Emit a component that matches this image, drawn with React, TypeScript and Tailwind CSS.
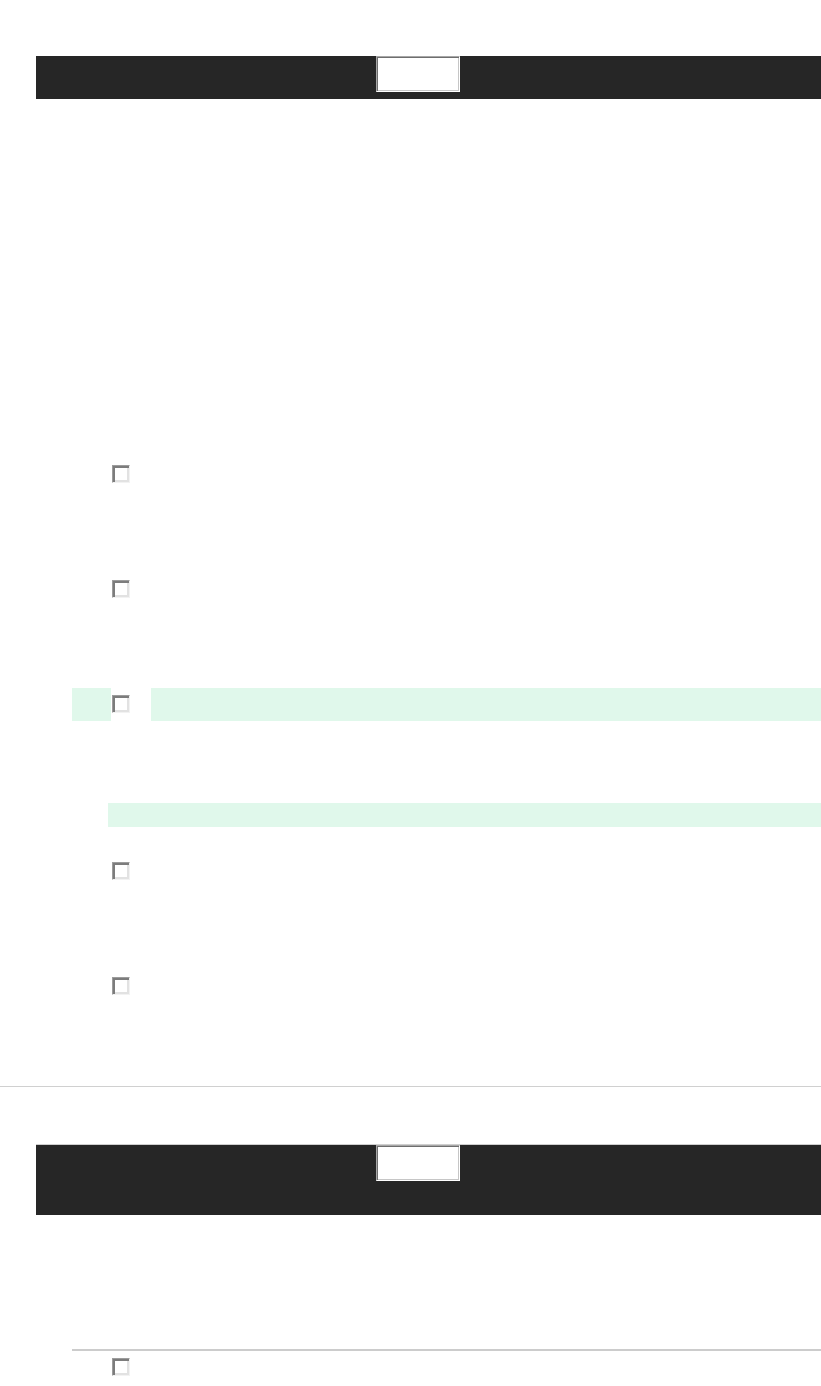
import React from 'react';

// sunken checkbox drawn like the old-style form controls in the shot
function Box() {
  return (
    <span className="block w-[18px] h-[18px] bg-white border border-t-[#9c9c9c] border-l-[#9c9c9c] border-b-[#f2f2f2] border-r-[#f2f2f2] shadow-[inset_2px_2px_0_#7c7c7c,inset_-2px_-2px_0_#e2e2e2]" />
  );
}

function Bar({ tall = false, rule = false }: { tall?: boolean; rule?: boolean }) {
  return (
    <div
      className={`ml-[36px] bg-[#262626] pl-[340px] ${tall ? 'h-[71px]' : 'h-[43px]'} ${
        rule ? 'border-t border-[#cfcfcf]' : ''
      }`}
    >
      <input
        type="text"
        aria-label="search"
        className="block w-[84px] h-[36px] bg-white outline-none border border-t-[#a7a7a7] border-l-[#a7a7a7] border-b-white border-r-white shadow-[inset_1px_1px_0_#6e6e6e,inset_-1px_-1px_0_#c6c6c6]"
      />
    </div>
  );
}

export default function App() {
  return (
    <div className="w-[821px] min-h-[1386px] bg-white font-['Liberation_Sans',sans-serif] pt-[56px]">
      <Bar />

      <div className="pl-[72px]">
        <div className="mt-[366px] pl-[40px]"><Box /></div>
        <div className="mt-[97px] pl-[40px]"><Box /></div>

        {/* selected row */}
        <div className="mt-[90px] grid grid-cols-[39px_40px_1fr] h-[33px]">
          <div className="bg-[#e0f8eb]" />
          <div className="pt-[7px] pl-[1px]"><Box /></div>
          <div className="bg-[#e0f8eb]" />
        </div>

        <div className="mt-[82px] ml-[36px] h-[24px] bg-[#e0f8eb]" />

        <div className="mt-[35px] pl-[40px]"><Box /></div>
        <div className="mt-[97px] pl-[40px]"><Box /></div>
      </div>

      <div className="mt-[91px] h-px bg-[#d0d0d0]" />

      <div className="mt-[57px]">
        <Bar tall rule />
      </div>

      <div className="mt-[134px] ml-[72px] h-[2px] bg-[#cccccc]" />
      <div className="mt-[7px] pl-[112px]"><Box /></div>
    </div>
  );
}
